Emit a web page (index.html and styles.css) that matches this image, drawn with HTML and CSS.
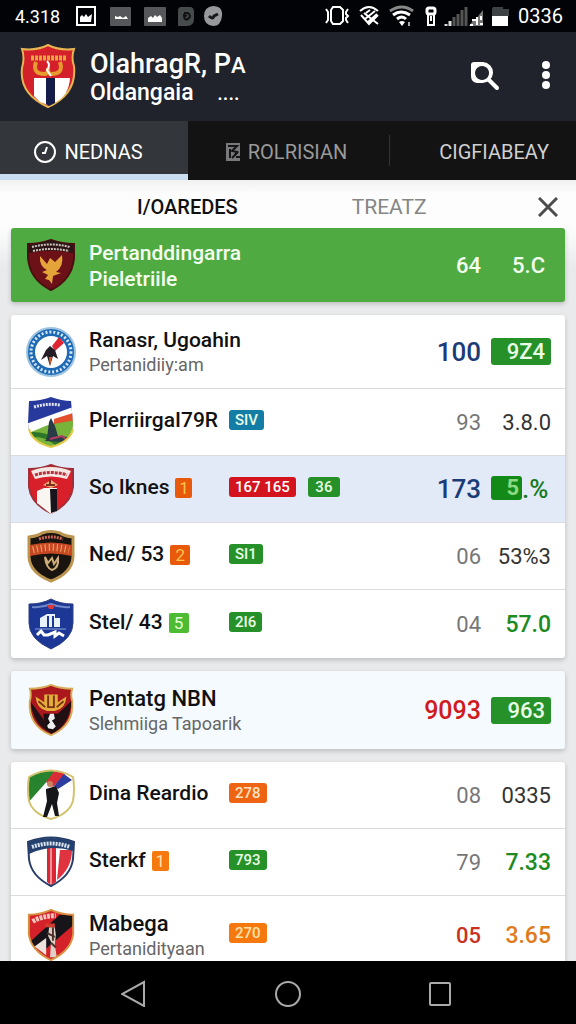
FILE: index.html
```html
<!DOCTYPE html>
<html lang="id">
<head>
    <meta charset="UTF-8">
    <meta name="viewport" content="width=device-width, initial-scale=1.0">
    <title>Olahraga</title>
    <link rel="stylesheet" href="styles.css">
</head>
<body>
    <div class="status-bar">
        <span class="status-time">4.318</span>
        <svg class="status-left" width="148" height="22" viewBox="0 0 148 22">
            <rect x="2" y="2" width="18" height="18" fill="none" stroke="#fff" stroke-width="2"/>
            <path d="M5 17v-5l2-2 2 2 2-3 2 3 4-3-1 8z" fill="#fff"/>
            <rect x="35" y="2" width="21" height="19" rx="1" fill="#55575a"/>
            <path d="M40 14v-3l3 1 2-1 3 2 3-2 2 3z" fill="#fff"/>
            <rect x="69" y="2" width="22" height="19" rx="1" fill="#55575a"/>
            <path d="M73 17v-4l3-2 2 2 2-3 2 2 3-2 2 3v4z" fill="#fff"/>
            <path d="M106 2h9q4 0 4 5v7q0 7-7 7h-9V6q0-4 3-4z" fill="#454b4b"/>
            <path d="M109 8h4q4 3 0 6-4 2-4-4l3 1" fill="none" stroke="#111" stroke-width="2"/>
            <path d="M138 1q10 0 9 10t-9 10q-9-1-9-10t9-10z" fill="#97999c"/>
            <path d="M134 11q4 4 5 0l4-2" fill="none" stroke="#15171a" stroke-width="3"/>
        </svg>
        <svg class="status-right" width="184" height="22" viewBox="0 0 184 22">
            <!-- vibrate -->
            <path d="M8 2h7l3 3v11l-3 3H8l-2-3V5z" fill="none" stroke="#fff" stroke-width="2"/>
            <path d="M1 4l2 3v8l-2 3M23 4l-2 3v2l2 2-2 2v2l2 3" fill="none" stroke="#fff" stroke-width="2"/>
            <!-- no sync -->
            <path d="M35 6q9-8 18 0M36 10l8 9 9-9M39 8l14 11M50 6L40 14M52 9l-9 8M41 8l4-3" fill="none" stroke="#fff" stroke-width="2"/>
            <!-- wifi -->
            <path d="M65 6q12-8 23 0" fill="none" stroke="#888" stroke-width="3"/>
            <path d="M68 10q8-6 17 0M72 14q5-4 9 0" fill="none" stroke="#fff" stroke-width="3"/>
            <path d="M74 17q3-2 6 0l-3 4z" fill="#fff"/>
            <path d="M84 17v4" stroke="#aaa" stroke-width="2"/>
            <!-- key -->
            <rect x="102" y="3" width="8" height="6" rx="2" fill="none" stroke="#fff" stroke-width="3"/>
            <path d="M103 10v10h6V10M106 11v5" fill="none" stroke="#fff" stroke-width="2"/>
            <!-- signals -->
            <path d="M121 21v-2M125 21v-5" stroke="#ddd" stroke-width="3"/>
            <path d="M129 21v-9M133 21V9M137 21V5M141 21V2" stroke="#555" stroke-width="3"/>
            <path d="M144 21l3-4 1-3 3 1 3-5 4-5v16z" fill="#777"/>
            <path d="M145 20h3M147 15h4M152 12v8M156 11v4M155 19h3" stroke="#fff" stroke-width="2"/>
            <!-- battery -->
            <path d="M168 2h10v2h6v7h-17V4z" fill="#3d4245"/>
            <rect x="167" y="11" width="16" height="10" fill="#fff"/>
        </svg>
        <span class="status-clock">0336</span>
    </div>

    <header class="app-bar">
        <svg class="app-logo" viewBox="0 0 56 64">
            <path d="M2 5q14 2 26-4 12 6 26 4-3 9 0 17 3 28-26 41Q-1 50 2 24q3-10 0-19z" fill="#d4202a" stroke="#e7b552" stroke-width="2"/>
            <path d="M14 34h36q-1 17-14 24l-8 3-8-3-6-6z" fill="#fff"/>
            <path d="M26 34h9v25l-6 3-3-2z" fill="#141d4a"/>
            <path d="M11 14h36" stroke="#eaa83c" stroke-width="5" stroke-dasharray="3 1"/>
            <path d="M16 18q-4 12 9 12 3 0 3-6 0 6 3 6 13 0 9-12" fill="none" stroke="#e79b2f" stroke-width="4"/>
            <path d="M27 17q4 4 0 9l4 6" fill="none" stroke="#fff" stroke-width="2"/>
        </svg>
        <div class="app-title">
            <h1>OlahragR, P<small>A</small></h1>
            <p>Oldangaia <span>....</span></p>
        </div>
        <button class="icon-button" aria-label="Cari">
            <svg width="30" height="30" viewBox="0 0 30 30">
                <path d="M4 1h9a10 10 0 1 1-1 21H7q-6-1-6-7V4q0-3 3-3zM12 5a7 7 0 1 0 .1 0z" fill="#fff" fill-rule="evenodd"/>
                <path d="M19 19l8 8" stroke="#fff" stroke-width="4" stroke-linecap="round"/>
            </svg>
        </button>
        <button class="icon-button" aria-label="Menu">
            <svg width="8" height="30" viewBox="0 0 8 30" fill="#fff">
                <circle cx="4" cy="4" r="4"/>
                <circle cx="4" cy="14" r="4"/>
                <circle cx="4" cy="24" r="4"/>
            </svg>
        </button>
    </header>

    <nav class="tabs">
        <button class="tab active">
            <svg width="24" height="24" viewBox="0 0 24 24" fill="none" stroke="#fff">
                <circle cx="12" cy="12" r="10" stroke-width="2"/>
                <path d="M14 7l-2 6H9" stroke-width="2"/>
            </svg>
            NEDNAS
        </button>
        <button class="tab">
            <svg width="16" height="20" viewBox="0 0 16 20">
                <path d="M1 1h14v18H1z" fill="#77797a"/>
                <path d="M3 4h9l-5 5 5 1-3 4M5 7v9M7 16l6-6M11 15h4" fill="none" stroke="#151515" stroke-width="2"/>
            </svg>
            ROLRISIAN
        </button>
        <button class="tab tab-end">CIGFIABEAY</button>
    </nav>

    <div class="sub-tabs">
        <button class="sub-tab active">I/OAREDES</button>
        <button class="sub-tab">TREATZ</button>
        <button class="close" aria-label="Tutup">
            <svg width="20" height="20" viewBox="0 0 20 20">
                <path d="M1 1l18 18M19 1L1 19" stroke="#4c4c4c" stroke-width="3"/>
            </svg>
        </button>
    </div>

    <main class="list">
        <section class="card card-green">
            <div class="row">
                <svg class="crest" viewBox="0 0 50 54">
                    <path d="M2 6q12 0 23-4 11 4 23 4v14q-2 22-23 32Q4 42 2 20z" fill="#6d1118" stroke="#4a100f" stroke-width="2"/>
                    <path d="M3 7q11-1 22-5 11 4 22 5v8q-22-5-44 0z" fill="#2b1516"/>
                    <path d="M6 9q19-5 38 0M7 13q18-4 36 0" fill="none" stroke="#cfc3bd" stroke-width="2" stroke-dasharray="2 1"/>
                    <path d="M14 18l7 8 3-6 5 4 7-7q2 11-6 17l5 1-8 3-1 8-3-4-4-1 3-4-6-3 5-2q-8-4-7-14z" fill="#e5a43a"/>
                </svg>
                <div class="team">
                    <h2>Pertanddingarra</h2>
                    <h2>Pieletriile</h2>
                </div>
                <span class="points">64</span>
                <span class="rate inset">5.C</span>
            </div>
        </section>

        <section class="card">
            <div class="row double">
                <svg class="crest" viewBox="0 0 50 52">
                    <circle cx="25" cy="26" r="24" fill="#1d69b4" stroke="#9cc3df" stroke-width="2"/>
                    <circle cx="25" cy="26" r="20" fill="none" stroke="#d4e6f4" stroke-width="3" stroke-dasharray="2 2"/>
                    <circle cx="25" cy="26" r="16" fill="#fff"/>
                    <path d="M26 20l7-9 5 6-9 8z" fill="#df2434"/>
                    <path d="M24 20l5 4 3 9-5-3-3 10-3-10-6 4 5-10z" fill="#241c24"/>
                    <path d="M23 31l1 9 2-9z" fill="#e2622f"/>
                </svg>
                <div class="team">
                    <h2>Ranasr, Ugoahin</h2>
                    <p>Pertanidiiy:am</p>
                </div>
                <span class="points navy">100</span>
                <span class="rate pill">9Z4</span>
            </div>
            <div class="row">
                <svg class="crest" viewBox="0 0 50 52">
                    <clipPath id="clipA"><path d="M3 5q11 0 22-4 11 4 20 4l2 22q1 17-22 24Q2 44 2 27z"/></clipPath>
                    <g clip-path="url(#clipA)">
                        <rect width="50" height="52" fill="#27399c"/>
                        <path d="M0 28L50 10v42H0z" fill="#fff"/>
                        <path d="M28 23l22-7v9l-22 5z" fill="#e2502c"/>
                        <path d="M0 38l22-9 28-5v28H0z" fill="#78b33a"/>
                        <path d="M0 39q18-2 28 6t22 2" fill="none" stroke="#2d7529" stroke-width="5"/>
                        <path d="M21 42l2-16 2-4 4 8 3 10 10 1-5 5-18-1z" fill="#293c46"/>
                        <path d="M24 43l12-3 5 4" fill="none" stroke="#b43c63" stroke-width="2"/>
                        <path d="M8 11q13-4 26-2" fill="none" stroke="#e1e5f5" stroke-width="3" stroke-dasharray="2 1"/>
                    </g>
                    <path d="M3 33q3 13 22 18 19-5 22-18" fill="none" stroke="#e2ca47" stroke-width="2"/>
                </svg>
                <div class="team">
                    <h3>PlerriirgaI79R</h3>
                </div>
                <span class="badge teal">SIV</span>
                <span class="points">93</span>
                <span class="rate">3.8.0</span>
            </div>
            <div class="row selected">
                <svg class="crest" viewBox="0 0 50 52">
                    <path d="M3 6q12 0 22-4 10 4 22 4v18q-2 17-22 26Q5 41 3 24z" fill="#d7202a" stroke="#9f3039" stroke-width="2"/>
                    <path d="M5 8q20-8 40 0l-4 8q-16-5-32 0z" fill="#f4e8e5"/>
                    <path d="M9 12q16-5 32 0" fill="none" stroke="#b83039" stroke-width="3" stroke-dasharray="3 1"/>
                    <path d="M11 28l7-3h13v23l-6 3-14-11z" fill="#f9f5f0"/>
                    <path d="M24 26h7v22l-6 2z" fill="#17151b"/>
                    <path d="M17 22l8-5 7 5-7 3z" fill="#e9b078"/>
                    <path d="M24 16v7M20 22h9" stroke="#7e3120" stroke-width="2"/>
                </svg>
                <div class="team">
                    <h3>So Iknes</h3>
                    <span class="rank narrow">1</span>
                </div>
                <span class="badge red">167 165</span>
                <span class="badge">36</span>
                <span class="points navy">173</span>
                <span class="rate split"><b>5</b>.%</span>
            </div>
            <div class="row">
                <svg class="crest" viewBox="0 0 50 52">
                    <path d="M3 7q9-1 13-4 9-3 18 0 4 3 13 4v20q-1 16-22 24Q4 43 3 27z" fill="#19140f" stroke="#bb944f" stroke-width="3"/>
                    <path d="M4 15q21-5 42 0v11q-21-5-42 0z" fill="#c94824"/>
                    <path d="M7 20q18-5 36 0" fill="none" stroke="#ecb06a" stroke-width="7" stroke-dasharray="1 3"/>
                    <path d="M13 9q12-4 24 0" fill="none" stroke="#cb6555" stroke-width="3" stroke-dasharray="2 1"/>
                    <path d="M19 27l3 6 4-5 2 6 4-6q1 10-6 12-6-2-7-13z" fill="none" stroke="#cfad79" stroke-width="2"/>
                </svg>
                <div class="team">
                    <h3>Ned/ 53</h3>
                    <span class="rank">2</span>
                </div>
                <span class="badge">SI1</span>
                <span class="points">06</span>
                <span class="rate">53%3</span>
            </div>
            <div class="row">
                <svg class="crest" viewBox="0 0 50 52">
                    <path d="M3 6q13 0 22-5 9 5 22 5v19q0 16-22 26Q3 41 3 25z" fill="#1c3795" stroke="#2f4080" stroke-width="1"/>
                    <path d="M6 9q10 1 19-3 9 4 19 3" fill="none" stroke="#7189c6" stroke-width="2"/>
                    <path d="M21 7h8l-2 4h-4z" fill="#dc3740"/>
                    <path d="M14 29V20l7-4h8v4h5v9h-6V18h-2v11h-3V18h-2v11z" fill="#e9f1fa"/>
                    <path d="M11 37l4-4 3 4h4l7-3v4l4-3 5 3" fill="none" stroke="#fff" stroke-width="3"/>
                    <path d="M9 31h31" stroke="#8ca8db"/>
                </svg>
                <div class="team">
                    <h3>Stel/ 43</h3>
                    <span class="rank lime">5</span>
                </div>
                <span class="badge">2I6</span>
                <span class="points">04</span>
                <span class="rate strong green">57.0</span>
            </div>
        </section>

        <section class="card card-blue">
            <div class="row double">
                <svg class="crest" viewBox="0 0 50 56">
                    <path d="M3 6q12 0 22-4 10 4 22 4-2 6 0 13 2 25-22 35Q1 44 3 19q2-7 0-13z" fill="#aa171c" stroke="#d7ac57" stroke-width="2"/>
                    <path d="M4 20l13 17 8 15q-19-9-21-32zM46 19L31 33l-6 20q20-9 21-34z" fill="#201014"/>
                    <path d="M9 14l9 6V12h14v8l9-6q-1 13-12 15H21Q10 27 9 14z" fill="#e4ad3c"/>
                    <path d="M22 13v12h6V13M12 19l7 6M38 19l-7 6" fill="none" stroke="#7b3315" stroke-width="2"/>
                    <path d="M17 32h17l-3 14-6 6-6-7z" fill="#1b0f12"/>
                    <path d="M24 32h4l1 5-3 2 4 6-3 3-5-1-1-3 3-3-2-4z" fill="#eee"/>
                </svg>
                <div class="team">
                    <h2>Pentatg NBN</h2>
                    <p>Slehmiiga Tapoarik</p>
                </div>
                <span class="points scarlet">9093</span>
                <span class="rate pill">963</span>
            </div>
        </section>

        <section class="card">
            <div class="row">
                <svg class="crest" viewBox="0 0 50 52">
                    <clipPath id="clipB"><path d="M3 8q22-13 44 0 2 12 0 24-4 13-22 18Q7 45 3 32 1 20 3 8z"/></clipPath>
                    <g clip-path="url(#clipB)">
                        <rect width="50" height="52" fill="#fff"/>
                        <path d="M0 0h32L0 36z" fill="#27832d"/>
                        <path d="M30 0l9 5-12 13-7-5z" fill="#d92c36"/>
                        <path d="M38 5l8 6-14 9-4-3z" fill="#2c3c9f"/>
                    </g>
                    <path d="M3 8q22-13 44 0 2 12 0 24-4 13-22 18Q7 45 3 32 1 20 3 8z" fill="none" stroke="#d2c26b" stroke-width="2"/>
                    <circle cx="24" cy="15" r="3" fill="#c7835d"/>
                    <path d="M20 20l10-3 3 7-2 10 2 13h-4l-3-12-5 13h-4l4-16-1-9z" fill="#15161a"/>
                </svg>
                <div class="team">
                    <h3>Dina Reardio</h3>
                </div>
                <span class="badge orange">278</span>
                <span class="points">08</span>
                <span class="rate">0335</span>
            </div>
            <div class="row">
                <svg class="crest" viewBox="0 0 50 52">
                    <path d="M2 6q23-9 46 0l-1 17q-2 17-22 27Q5 40 3 23z" fill="#fff" stroke="#263c69" stroke-width="2"/>
                    <path d="M21 12h9v34l-5 3-4-3z" fill="#d92735"/>
                    <path d="M34 14h12q0 18-15 30z" fill="#df3440"/>
                    <path d="M25 12v36" stroke="#fff" stroke-width="1"/>
                    <path d="M3 6q22-8 44 0v9q-22-7-44 3z" fill="#23406e"/>
                    <path d="M6 11q19-7 38 0" fill="none" stroke="#dbe3ee" stroke-width="4" stroke-dasharray="2 1"/>
                </svg>
                <div class="team">
                    <h3>Sterkf</h3>
                    <span class="rank narrow amber">1</span>
                </div>
                <span class="badge">793</span>
                <span class="points">79</span>
                <span class="rate strong green">7.33</span>
            </div>
            <div class="row double last">
                <svg class="crest" viewBox="0 0 50 56">
                    <clipPath id="clipC"><path d="M2 7q12 0 23-5 11 5 23 5v20q-2 17-23 27Q4 44 2 27z"/></clipPath>
                    <g clip-path="url(#clipC)">
                        <rect width="50" height="56" fill="#d5212a"/>
                        <path d="M0 38L34 7l16 1v8L20 42z" fill="#17141a"/>
                        <path d="M8 40l12-9v18z" fill="#eee2dc"/>
                        <path d="M6 14q10-6 24-6" fill="none" stroke="#f1c7be" stroke-width="5" stroke-dasharray="3 1"/>
                        <path d="M23 20h6l1 8-1 10 2 13h-7l1-16-3-6z" fill="#ddd0c7"/>
                        <path d="M21 26l8 4M25 36l5 5M27 20v14" stroke="#51302c" stroke-width="2"/>
                        <path d="M19 18h10" stroke="#d43c2b" stroke-width="4"/>
                    </g>
                    <path d="M2 7q12 0 23-5 11 5 23 5v20q-2 17-23 27Q4 44 2 27z" fill="none" stroke="#d89442" stroke-width="2"/>
                </svg>
                <div class="team">
                    <h2>Mabega</h2>
                    <p>Pertanidityaan</p>
                </div>
                <span class="badge amber">270</span>
                <span class="points strong brick">05</span>
                <span class="rate strong tangerine">3.65</span>
            </div>
        </section>
    </main>

    <nav class="nav-bar">
        <button aria-label="Kembali">
            <svg width="28" height="28" viewBox="0 0 28 28"><path d="M23 3v24L1 15z"/></svg>
        </button>
        <button aria-label="Beranda">
            <svg width="28" height="28" viewBox="0 0 28 28"><circle cx="14" cy="15" r="12"/></svg>
        </button>
        <button aria-label="Terkini">
            <svg width="28" height="28" viewBox="0 0 28 28"><rect x="3" y="4" width="20" height="22" rx="1"/></svg>
        </button>
    </nav>
</body>
</html>
```

FILE: styles.css
```css
* {
    box-sizing: border-box;
}

body {
    margin: 0;
    height: 100vh;
    display: flex;
    flex-direction: column;
    font-family: Roboto, "Liberation Sans", sans-serif;
    background: #e9eaeb;
    color: #111;
    overflow: hidden;
}

h1, h2, h3, p {
    margin: 0;
}

button {
    border: none;
    background: none;
    padding: 0;
    font-family: inherit;
    color: inherit;
    cursor: pointer;
}

/* Status bar */
.status-bar {
    height: 32px;
    flex-shrink: 0;
    display: flex;
    align-items: center;
    padding: 0 13px 0 15px;
    background: #020306;
    color: #fff;
    font-size: 20px;
}

.status-time {
    width: 60px;
    font-size: 18px;
}

.status-left, .status-right {
    flex-shrink: 0;
}

.status-right {
    margin-left: auto;
    margin-right: 9px;
}

/* App bar */
.app-bar {
    height: 89px;
    flex-shrink: 0;
    display: flex;
    align-items: center;
    padding: 0 26px 2px 20px;
    background: #20222c;
    color: #fff;
}

.app-logo {
    width: 56px;
    height: 64px;
    margin-right: 14px;
}

.app-title {
    flex: 1;
    padding-top: 4px;
    font-weight: 500;
}

.app-title h1 {
    font-size: 27px;
    line-height: 28px;
    font-weight: 500;
}

.app-title small {
    font-size: 22px;
}

.app-title p {
    font-size: 23px;
    line-height: 26px;
}

.app-title p span {
    margin-left: 18px;
    font-size: 20px;
}

.icon-button {
    margin-left: 42px;
    height: 30px;
}

.icon-button svg, .tab svg, .close svg {
    display: block;
}

/* Tabs */
.tabs {
    height: 59px;
    flex-shrink: 0;
    display: grid;
    grid-template-columns: 1fr 200px 1fr;
    background: #131314;
}

.tab {
    display: flex;
    align-items: center;
    justify-content: center;
    gap: 7px;
    padding-top: 3px;
    padding-right: 4px;
    color: #9a9a9a;
    font-size: 20px;
}

.tab.active {
    background: #33363a;
    color: #fff;
    border-bottom: 6px solid #cbdff0;
    padding-right: 12px;
    padding-top: 8px;
}

.tab.tab-end {
    justify-content: flex-end;
    padding-right: 27px;
    color: #d0d0d0;
    background: linear-gradient(#333, #333) 1px center / 1px 31px no-repeat;
}

/* Sub tabs */
.sub-tabs {
    height: 48px;
    flex-shrink: 0;
    display: flex;
    align-items: center;
    padding: 5px 18px 0 137px;
    background: linear-gradient(#f1f1f2, #fdfdfd 14px);
}

.sub-tab {
    font-size: 21px;
    color: #858585;
}

.sub-tab.active {
    font-size: 20px;
    font-weight: 500;
    color: #111;
    margin-right: 114px;
}

.close {
    margin-left: auto;
}

/* List */
.list {
    flex: 1;
    min-height: 0;
    overflow: hidden;
    display: flex;
    flex-direction: column;
    gap: 13px;
    padding: 0 11px;
    background: linear-gradient(#fdfdfd, #e9eaeb 40px);
}

.card {
    flex-shrink: 0;
    background: #fff;
    border-radius: 3px;
    box-shadow: 0 2px 5px rgba(0, 0, 0, 0.2);
    overflow: hidden;
}

.row {
    height: 67px;
    display: flex;
    align-items: center;
    padding: 0 14px 0 15px;
    border-bottom: 1px solid #dcdcdc;
}

.row:last-child {
    height: 68px;
    border-bottom: none;
}

.row.double {
    height: 74px;
}

.card-green {
    background: #50aa42;
}

.card-green .row:last-child {
    height: 74px;
    color: #f4fff0;
}

.card-blue {
    background: #f5faff;
}

.card-blue .row.double, .row.last {
    height: 78px;
}

.row.selected {
    background: #e1eaf6;
}

.crest {
    width: 50px;
    height: 54px;
    margin-right: 13px;
    flex-shrink: 0;
}

.team {
    min-width: 140px;
    padding-top: 1px;
    white-space: nowrap;
}

.team h2, .team h3 {
    font-size: 21px;
    line-height: 26px;
    font-weight: 500;
}

.card-blue .team h2, .last .team h2 {
    font-size: 22px;
}

.team h3 {
    display: inline-block;
    padding-bottom: 5px;
}

.team p {
    font-size: 18px;
    line-height: 24px;
    color: #666;
}

.rank {
    display: inline-block;
    width: 20px;
    height: 20px;
    margin-left: 2px;
    border-radius: 2px;
    background: #e8590c;
    color: #ffc34d;
    font-size: 17px;
    line-height: 20px;
    text-align: center;
}

.rank.narrow {
    width: 17px;
}

.rank.lime {
    background: #4dbb33;
    color: #e6ffda;
}

.badge {
    min-width: 32px;
    height: 20px;
    margin-right: 12px;
    margin-bottom: 4px;
    padding: 0 6px;
    border-radius: 3px;
    background: #259128;
    color: #e9ffe6;
    font-size: 15px;
    line-height: 20px;
    font-weight: 500;
    text-align: center;
}

.badge.teal {
    background: #147da6;
}

.badge.red {
    background: #d3131d;
    color: #fff;
}

.badge.orange {
    background: #ee6412;
    color: #ffe2c0;
}

.badge.amber, .rank.amber {
    background: #f5790f;
    color: #ffe2a8;
}

.points {
    margin-left: auto;
    font-size: 22px;
    color: #777;
}

.rate {
    width: 60px;
    height: 27px;
    margin-left: 10px;
    font-size: 22px;
    line-height: 27px;
    text-align: right;
    color: #333;
}

.card-green .points, .card-green .rate {
    color: inherit;
    font-weight: 500;
}

.rate.inset, .rate.pill {
    padding-right: 6px;
}

.rate.pill {
    border-radius: 3px;
    background: #259128;
    color: #e9ffe6;
    font-weight: 500;
}

.rate.strong {
    font-size: 23px;
}

.rate.split {
    display: flex;
    color: #157a20;
    font-size: 26px;
    font-weight: 500;
}

.rate.split b {
    width: 31px;
    height: 24px;
    padding-right: 3px;
    border-radius: 3px;
    background: #138a17;
    color: #8ed983;
    font-size: 22px;
    line-height: 24px;
}

.strong {
    font-weight: 500;
}

.navy {
    color: #1c3c78;
    font-size: 26px;
    font-weight: 500;
}

.scarlet {
    color: #d01a20;
    font-size: 25px;
    font-weight: 500;
}

.green {
    color: #1d8a22;
}

.brick {
    color: #c8321f;
}

.tangerine {
    color: #e07b1c;
}

/* Navigation bar */
.nav-bar {
    height: 63px;
    flex-shrink: 0;
    display: flex;
    align-items: center;
    justify-content: center;
    gap: 125px;
    background: #000;
}

.nav-bar svg {
    display: block;
    fill: none;
    stroke: #aaa;
    stroke-width: 2;
}
```
